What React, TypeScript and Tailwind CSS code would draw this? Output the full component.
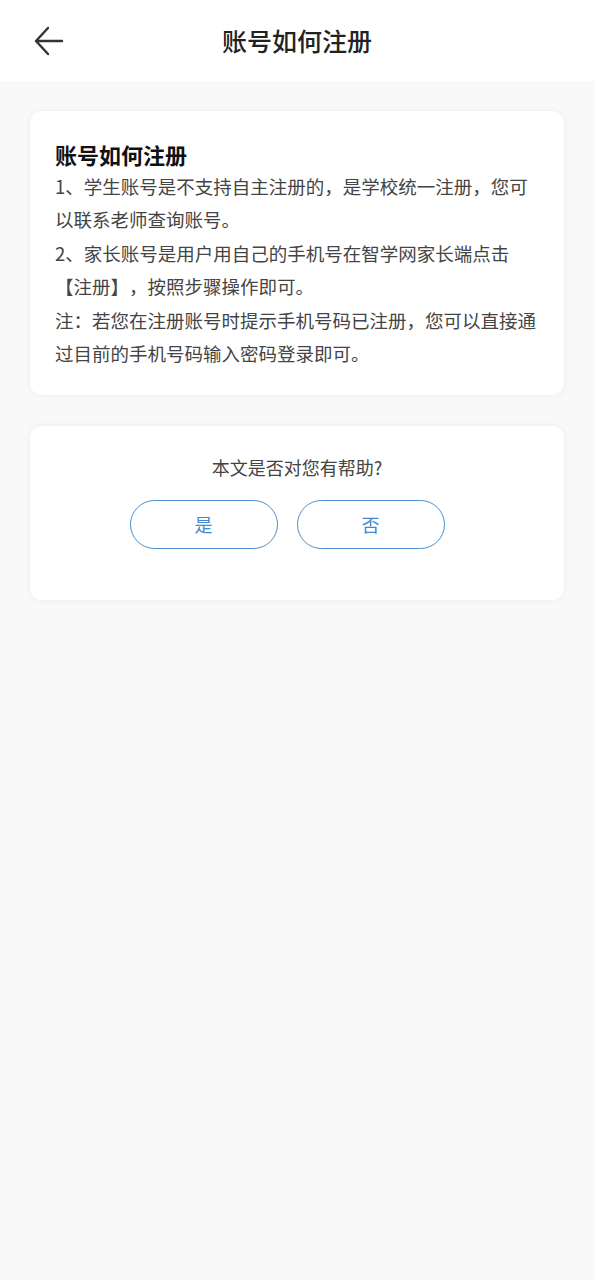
import React from 'react'

const font = { fontFamily: '"Noto Sans CJK SC", "Noto Sans", sans-serif' }

function BackArrow() {
  return (
    <svg width="30" height="30" viewBox="0 0 30 30" fill="none" stroke="#333" strokeWidth="2.4" strokeLinecap="round" strokeLinejoin="round">
      <path d="M28 15H3" />
      <path d="M14 2L2 15l12 13" />
    </svg>
  )
}

export default function App() {
  return (
    <div className="min-h-[1280px] bg-[#f9f9f9] text-[#333] [text-spacing-trim:space-all]" style={font}>
      <header className="relative flex h-[81px] items-center justify-center bg-white">
        <button type="button" className="absolute left-[34px] top-[26px]">
          <BackArrow />
        </button>
        <h1 className="text-[25px] font-medium leading-none text-[#222]">账号如何注册</h1>
      </header>

      <main className="flex flex-col gap-[31px] px-[30px] pt-[30px]">
        <section className="rounded-[12px] bg-white px-[25px] pb-[25px] pt-[28px] shadow-[0_0_6px_rgba(0,0,0,0.06)]">
          <h2 className="text-[22px] font-bold leading-[31px] text-[#111]">账号如何注册</h2>
          <div className="text-[18.5px] leading-[33.4px] text-[#444]">
            <p>1、学生账号是不支持自主注册的，是学校统一注册，您可以联系老师查询账号。</p>
            <p>2、家长账号是用户用自己的手机号在智学网家长端点击【注册】，按照步骤操作即可。</p>
            <p>注：若您在注册账号时提示手机号码已注册，您可以直接通过目前的手机号码输入密码登录即可。</p>
          </div>
        </section>

        <section className="flex flex-col items-center rounded-[12px] bg-white pb-[51px] pt-[29px] shadow-[0_0_6px_rgba(0,0,0,0.06)]">
          <p className="text-[18px] leading-[24px] text-[#444]">本文是否对您有帮助?</p>
          <div className="mt-[21px] flex gap-[19px] pr-[20px]">
            <button type="button" className="h-[49px] w-[148px] rounded-full border border-[#4a8fd6] text-[18px] text-[#3f88d4]">是</button>
            <button type="button" className="h-[49px] w-[148px] rounded-full border border-[#4a8fd6] text-[18px] text-[#3f88d4]">否</button>
          </div>
        </section>
      </main>
    </div>
  )
}
